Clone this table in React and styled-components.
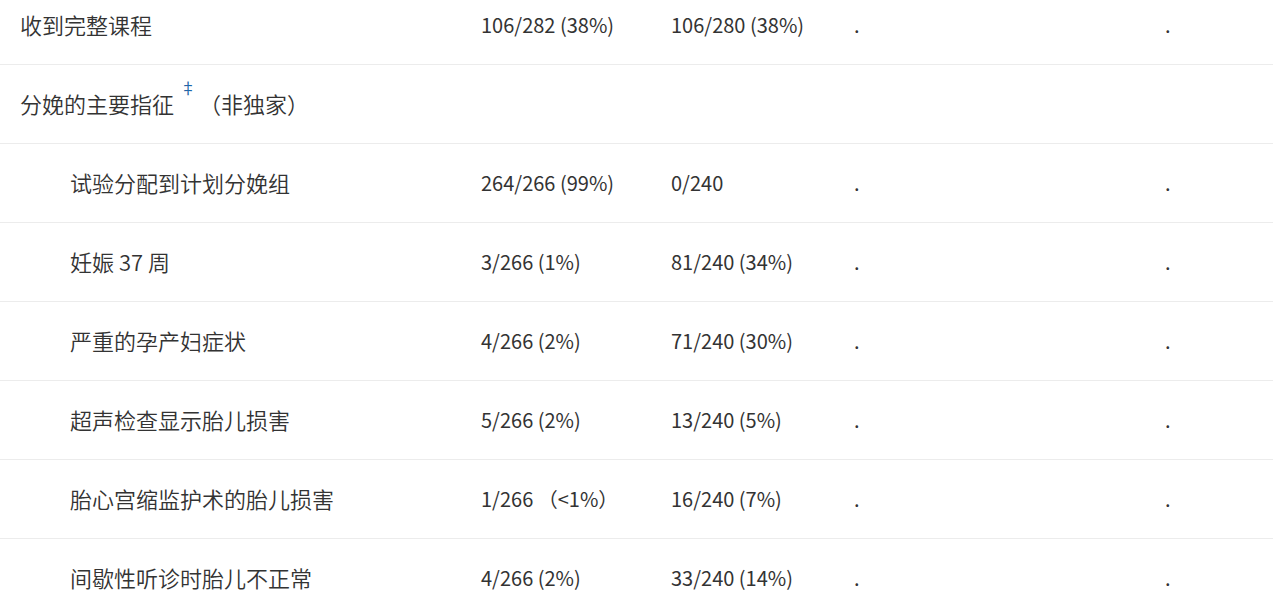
import React from "react";
import styled, { createGlobalStyle } from "styled-components";

const rows = [
  { label: "收到完整课程", a: "106/282 (38%)", b: "106/280 (38%)", c: ".", d: "." },
  { label: "分娩的主要指征", note: "‡", tail: "（非独家）", heading: true },
  { label: "试验分配到计划分娩组", a: "264/266 (99%)", b: "0/240", c: ".", d: ".", sub: true },
  { label: "妊娠 37 周", a: "3/266 (1%)", b: "81/240 (34%)", c: ".", d: ".", sub: true },
  { label: "严重的孕产妇症状", a: "4/266 (2%)", b: "71/240 (30%)", c: ".", d: ".", sub: true },
  { label: "超声检查显示胎儿损害", a: "5/266 (2%)", b: "13/240 (5%)", c: ".", d: ".", sub: true },
  { label: "胎心宫缩监护术的胎儿损害", a: "1/266 （<1%）", b: "16/240 (7%)", c: ".", d: ".", sub: true },
  { label: "间歇性听诊时胎儿不正常", a: "4/266 (2%)", b: "33/240 (14%)", c: ".", d: ".", sub: true },
];

function App() {
  return (
    <>
      <GlobalStyle />
      <Table>
        {rows.map((row, i) => (
          <Row key={i}>
            <Label sub={row.sub}>
              {row.label}
              {row.note && <Note>{row.note}</Note>}
              {row.tail && <span>{row.tail}</span>}
            </Label>
            {!row.heading && (
              <>
                <Cell>{row.a}</Cell>
                <Cell>{row.b}</Cell>
                <Cell>{row.c}</Cell>
                <Cell>{row.d}</Cell>
              </>
            )}
          </Row>
        ))}
      </Table>
    </>
  );
}

export default App;

const GlobalStyle = createGlobalStyle`
  html, body {
    margin: 0;
    padding: 0;
    background: #fff;
    overflow: hidden;
  }
  body {
    font-family: "Noto Sans CJK SC", "Noto Sans", sans-serif;
    color: #333;
  }
`;

const Table = styled.div`
  margin-top: -14px;
  display: flex;
  flex-direction: column;
`;

const Row = styled.div`
  display: grid;
  grid-template-columns: 481px 190px 183px 311px 1fr;
  align-items: center;
  height: 79px;
  padding-bottom: 2px;
  box-sizing: border-box;
  border-bottom: 1px solid #ececec;
`;

const Label = styled.div`
  padding-left: ${(props) => (props.sub ? "70px" : "20px")};
  font-size: 22px;
  font-weight: 350;
  white-space: nowrap;
  display: flex;
  align-items: center;
`;

const Note = styled.sup`
  color: #1f66a8;
  font-size: 16px;
  font-weight: 400;
  margin: 0 3px 0 6px;
  align-self: flex-start;
  line-height: 1;
  position: relative;
  top: -8px;
`;

const Cell = styled.div`
  font-size: 20px;
  font-weight: 400;
  white-space: nowrap;
`;
